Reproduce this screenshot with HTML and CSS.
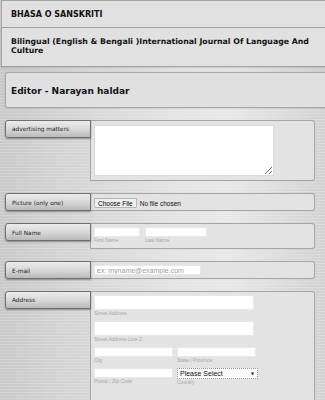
FILE: index.html
```html
<!DOCTYPE html>
<html lang="en">
<head>
  <meta charset="UTF-8">
  <meta name="viewport" content="width=device-width, initial-scale=1.0">
  <title>Bhasa O Sanskriti - Submission</title>
  <link rel="stylesheet" href="styles.css">
</head>
<body>
  <div class="site-title">BHASA O SANSKRITI</div>
  <div class="site-tagline">Bilingual (English &amp; Bengali )International Journal Of Language And Culture</div>

  <div class="editor-box">Editor - Narayan haldar</div>

  <form class="submit-form" action="#" method="POST">
    <div class="form-row">
      <label class="row-label">advertising matters</label>
      <div class="row-field">
        <textarea class="ad-text" name="ads"></textarea>
      </div>
    </div>

    <div class="form-row">
      <label class="row-label label-mid">Picture (only one)</label>
      <div class="row-field field-file">
        <input type="file" name="picture">
      </div>
    </div>

    <div class="form-row">
      <label class="row-label label-mid">Full Name</label>
      <div class="row-field field-name">
        <div class="sub">
          <input type="text" class="in-first" name="first">
          <span class="hint">First Name</span>
        </div>
        <div class="sub">
          <input type="text" class="in-last" name="last">
          <span class="hint">Last Name</span>
        </div>
      </div>
    </div>

    <div class="form-row">
      <label class="row-label label-mid">E-mail</label>
      <div class="row-field field-mail">
        <input type="email" class="in-mail" name="email" placeholder="ex: myname@example.com">
      </div>
    </div>

    <div class="form-row">
      <label class="row-label">Address</label>
      <div class="row-field field-address">
        <div class="sub">
          <input type="text" class="in-street" name="street">
          <span class="hint">Street Address</span>
        </div>
        <div class="sub">
          <input type="text" class="in-street" name="street2">
          <span class="hint">Street Address Line 2</span>
        </div>
        <div class="pair">
          <div class="sub">
            <input type="text" class="in-half" name="city">
            <span class="hint">City</span>
          </div>
          <div class="sub">
            <input type="text" class="in-half" name="state">
            <span class="hint">State / Province</span>
          </div>
        </div>
        <div class="pair">
          <div class="sub">
            <input type="text" class="in-half" name="zip">
            <span class="hint">Postal / Zip Code</span>
          </div>
          <div class="sub">
            <div class="select-wrap">
              <select name="country">
                <option>Please Select</option>
              </select>
            </div>
            <span class="hint hint-country">Country</span>
          </div>
        </div>
      </div>
    </div>
  </form>
</body>
</html>
```

FILE: styles.css
```css
* {
  margin: 0;
  padding: 0;
  box-sizing: border-box;
}

body {
  font-family: 'DejaVu Sans', Verdana, sans-serif;
  color: #111;
  overflow: hidden;
  background-color: #d8d8d8;
  background-image:
    repeating-linear-gradient(0deg, rgba(255, 255, 255, 0.18) 0, rgba(255, 255, 255, 0.18) 1px, transparent 1px, transparent 3px),
    linear-gradient(90deg, #c9c9c9 0%, #d6d6d6 25%, #e4e4e4 55%, #e8e8e8 70%, #d2d2d2 100%);
}

.site-title {
  height: 28px;
  margin-left: 1px;
  margin-right: -10px;
  padding: 9px 9px 0;
  background: #e1e1e1;
  border: 1px solid #a3a3a3;
  font-size: 8px;
  font-weight: bold;
}

.site-tagline {
  height: 39px;
  margin-left: 1px;
  margin-right: -10px;
  padding: 9px 9px 0;
  background: #e1e1e1;
  border: 1px solid #a3a3a3;
  border-top: none;
  font-size: 7.8px;
  font-weight: bold;
  line-height: 9px;
  box-shadow: 0 1px 2px rgba(0, 0, 0, 0.15);
}

.editor-box {
  height: 36px;
  margin: 5px -10px 12px 5px;
  padding: 13px 5px 0;
  background: #e0e0e0;
  border: 1px solid #a8a8a8;
  border-radius: 3px;
  font-size: 9px;
  font-weight: bold;
  box-shadow: 0 0 2px rgba(0, 0, 0, 0.2);
}

.form-row {
  display: flex;
  align-items: flex-start;
  margin-left: 5px;
  margin-bottom: 12px;
}

.row-label {
  width: 86px;
  height: 18px;
  flex-shrink: 0;
  margin-right: -1px;
  padding: 5px 6px 0;
  position: relative;
  z-index: 1;
  background: linear-gradient(#ececec, #d6d6d6 55%, #b9b9b9);
  border: 1px solid #6f6f6f;
  border-radius: 3px 0 0 3px;
  box-shadow: 0 1px 2px rgba(0, 0, 0, 0.35);
  font-size: 5.8px;
  color: #222;
}

.label-mid {
  padding-top: 6px;
}

.row-field {
  width: 225px;
  padding: 4px 3px;
  background: #e3e3e3;
  border: 1px solid #a5a5a5;
  border-radius: 0 3px 3px 0;
  box-shadow: 0 0 1px rgba(0, 0, 0, 0.15);
}

input[type="text"],
input[type="email"],
textarea {
  display: block;
  background: #fff;
  border: 1px solid #e8e8e8;
  outline: none;
}

.ad-text {
  width: 180px;
  height: 51px;
  resize: vertical;
  border: 1px solid #d9d9d9;
}

.field-file {
  height: 18px;
  padding-top: 4px;
}

.field-file input {
  display: block;
  font-family: 'Liberation Sans', Arial, sans-serif;
  font-size: 6.5px;
  color: #111;
}

.field-file input::file-selector-button {
  height: 10px;
  padding: 0 3px;
  margin-right: 3px;
  font-family: 'Liberation Sans', Arial, sans-serif;
  font-size: 6.5px;
  background: #efefef;
  border: 1px solid #b5b5b5;
  border-radius: 1px;
}

.field-name {
  display: flex;
  gap: 5px;
  height: 26px;
  padding-top: 3px;
}

.in-first { width: 46px; height: 10px; }
.in-last { width: 62px; height: 10px; }

.hint {
  display: block;
  font-family: 'Liberation Sans', Arial, sans-serif;
  font-size: 5px;
  color: #a8a8a8;
  line-height: 7px;
}

.field-mail {
  height: 18px;
  padding-top: 3px;
}

.in-mail {
  width: 107px;
  height: 10px;
  padding-left: 2px;
  font-family: 'Liberation Sans', Arial, sans-serif;
  font-size: 7px;
}

.in-mail::placeholder {
  color: #a0a0a0;
}

.field-address {
  height: 111px;
  padding-top: 3px;
}

.field-address .sub {
  margin-bottom: 4px;
}

.in-street {
  width: 160px;
  height: 15px;
}

.pair {
  display: flex;
  gap: 4px;
}

.in-half {
  width: 79px;
  height: 10px;
}

.select-wrap {
  position: relative;
  width: 81px;
  height: 11px;
}

.select-wrap select {
  appearance: none;
  display: block;
  width: 100%;
  height: 100%;
  padding-left: 2px;
  background: #fbfbfb;
  border: 1px dotted #999;
  font-family: 'Liberation Sans', Arial, sans-serif;
  font-size: 7px;
  color: #111;
}

.select-wrap::after {
  content: '\25BC';
  position: absolute;
  right: 4px;
  top: 3px;
  font-size: 4px;
  color: #222;
  pointer-events: none;
}

.hint-country {
  line-height: 6px;
}
```
